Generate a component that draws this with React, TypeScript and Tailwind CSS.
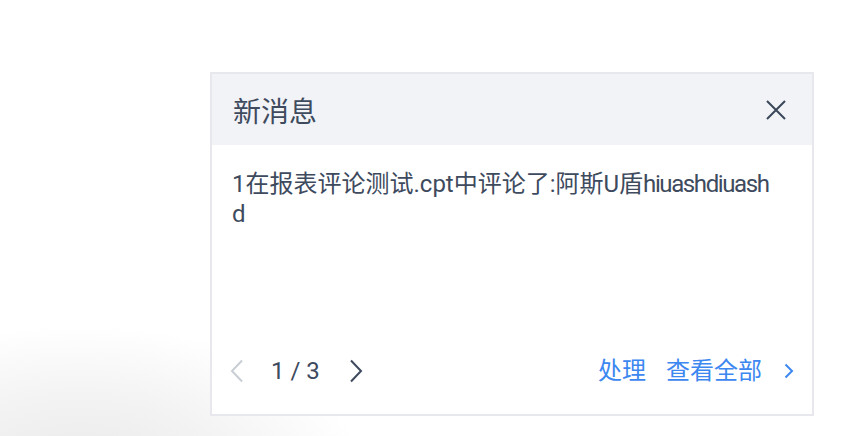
import React from "react";

const font = {
  fontFamily: 'Roboto, "Noto Sans CJK SC", sans-serif',
};

function Chevron({ dir, className }: { dir: "left" | "right"; className?: string }) {
  return (
    <svg width="14" height="24" viewBox="0 0 14 24" className={className} fill="none">
      {dir === "left" ? (
        <path d="M12 1.5 L2 12 L12 22.5" stroke="currentColor" strokeWidth="2" strokeLinejoin="miter" />
      ) : (
        <path d="M2 1.5 L12 12 L2 22.5" stroke="currentColor" strokeWidth="2" strokeLinejoin="miter" />
      )}
    </svg>
  );
}

export default function App() {
  return (
    <div className="relative w-[852px] h-[436px] overflow-hidden bg-white" style={font}>
      <div className="absolute left-[-200px] bottom-[-170px] w-[560px] h-[280px] rounded-full bg-[radial-gradient(closest-side,#eaeaea,#f3f3f3_50%,rgba(255,255,255,0))]" />
      <div className="relative pt-[72px] pl-[210px]">
        <div className="w-[604px] h-[344px] border-2 border-[#e7e8ed] bg-white flex flex-col">
          <div className="h-[71px] bg-[#f2f3f7] flex items-center justify-between pl-[21px] pr-[24px]">
            <span className="text-[28px] text-[#3e4a5d] leading-none" style={{ fontFamily: '"Noto Sans CJK SC", sans-serif' }}>新消息</span>
            <svg width="24" height="24" viewBox="0 0 24 24" fill="none" className="text-[#3a4659]">
              <path d="M3 3 L21 21 M21 3 L3 21" stroke="currentColor" strokeWidth="2" />
            </svg>
          </div>
          <div className="flex-1 flex flex-col px-[20px] pt-[24px]">
            <p className="text-[24px] leading-[30px] text-[#3e4a5d]">
              1在报表评论测试.cpt中评论了:阿斯U盾<span className="tracking-[-1.4px]">hiuashdiuash</span>
              <br />d
            </p>
          </div>
          <div className="h-[40px] mb-[23px] flex items-center justify-between pl-[18px] pr-[18px]">
            <div className="flex items-center">
              <Chevron dir="left" className="text-[#c9cdd4]" />
              <span className="ml-[27px] text-[24px] text-[#3e4a5d] leading-none">1 / 3</span>
              <Chevron dir="right" className="ml-[29px] text-[#3e4a5d]" />
            </div>
            <div className="flex items-center text-[#3d87f0] text-[24px] leading-none">
              <span>处理</span>
              <span className="ml-[20px]">查看全部</span>
              <svg width="10" height="16" viewBox="0 0 10 16" fill="none" className="ml-[22px]">
                <path d="M1.5 1.5 L8 8 L1.5 14.5" stroke="currentColor" strokeWidth="2" />
              </svg>
            </div>
          </div>
        </div>
      </div>
    </div>
  );
}
